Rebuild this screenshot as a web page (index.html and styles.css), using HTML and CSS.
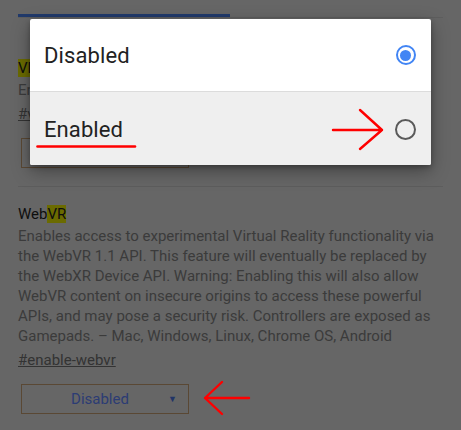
FILE: index.html
```html
<!DOCTYPE html>
<html lang="en">
<head>
<meta charset="utf-8">
<title>Flags</title>
<link rel="stylesheet" href="styles.css">
</head>
<body>
<div class="page">
  <div class="tabs"><div class="tab-active"></div></div>

  <section class="flag first">
    <h3 class="flag-title"><span class="hl">VR</span> Shell</h3>
    <p class="flag-desc">Enables a browser UI in Virtual Reality.</p>
    <a class="flag-link" href="#">#vr-shell</a>
    <div class="select"><span class="select-value">Default</span><span class="select-caret">▼</span></div>
  </section>

  <section class="flag">
    <h3 class="flag-title">Web<span class="hl">VR</span></h3>
    <p class="flag-desc">Enables access to experimental Virtual Reality functionality via the WebVR 1.1 API. This feature will eventually be replaced by the WebXR Device API. Warning: Enabling this will also allow WebVR content on insecure origins to access these powerful APIs, and may pose a security risk. Controllers are exposed as Gamepads. – Mac, Windows, Linux, Chrome OS, Android</p>
    <a class="flag-link" href="#">#enable-webvr</a>
    <div class="select"><span class="select-value">Disabled</span><span class="select-caret">▼</span></div>
  </section>
</div>

<div class="dialog">
  <div class="option">
    <span class="option-label">Disabled</span>
    <span class="radio radio-on"></span>
  </div>
  <div class="option option-alt">
    <span class="option-label">Enabled</span>
    <span class="radio"></span>
  </div>
</div>

<svg class="annot" width="461" height="430" viewBox="0 0 461 430" aria-hidden="true">
  <g stroke="#ff0000" stroke-width="2.4" fill="none" stroke-linecap="round" stroke-linejoin="round">
    <path d="M37.5 146.5 H135" stroke-width="2.6"/>
    <path d="M333 130 H382 M360 110 L382 130 L360 149"/>
    <path d="M249 398 H205 M222 382 L205 398 L222 414"/>
  </g>
</svg>
</body>
</html>
```

FILE: styles.css
```css
html {
  background: #666666;
  color-scheme: light;
}
html, body {
  margin: 0;
  padding: 0;
}
body {
  background: #666666;
  width: 461px;
  height: 430px;
  overflow: hidden;
  font-family: Roboto, "Noto Sans", "Liberation Sans", sans-serif;
}
.page {
  padding: 14px 18px 0 18px;
  width: 425px;
  background: #666666;
  height: 430px;
  box-sizing: border-box;
  width: 461px;
}
.tabs {
  height: 3px;
  border-bottom: 1px solid #5e5e5e;
  display: flex;
}
.tab-active {
  width: 212px;
  height: 3px;
  background: #213a6b;
}
.flag {
  padding: 40px 0 18px 0;
  border-bottom: 1px solid #5d5d5d;
  display: flex;
  flex-direction: column;
  align-items: flex-start;
}
.flag + .flag {
  padding-top: 17px;
  border-bottom: none;
}
.flag-title {
  margin: 0;
  font-size: 15px;
  line-height: 20px;
  font-weight: 400;
  color: #0e0e0e;
}
.hl {
  background: #6b6b00;
  color: #0e0e0e;
}
.flag-desc {
  margin: 2px 0 0 0;
  font-size: 15px;
  line-height: 20px;
  color: #3b3b3b;
}
.flag-link {
  margin-top: 4px;
  font-size: 15px;
  line-height: 20px;
  color: #333333;
  text-decoration: underline;
}
.select {
  margin: 14px 0 0 3px;
  width: 166px;
  height: 28px;
  border: 1px solid #5a4834;
  display: flex;
  align-items: center;
}
.select-value {
  flex: 1;
  text-align: center;
  font-size: 15px;
  color: #2c3c74;
  padding-left: 10px;
}
.select-caret {
  font-size: 9px;
  color: #213466;
  width: 20px;
  text-align: left;
}
.dialog {
  position: absolute;
  left: 30px;
  top: 19px;
  width: 401px;
  background: #ffffff;
  border-radius: 2px;
  overflow: hidden;
  box-shadow: 0 6px 18px rgba(0,0,0,0.35), 0 2px 5px rgba(0,0,0,0.25);
}
.option {
  height: 72px;
  display: flex;
  align-items: center;
  justify-content: space-between;
  padding: 0 15px 0 14px;
  border-bottom: 1px solid #dcdcdc;
}
.option-alt {
  background: #efefef;
  border-bottom: none;
  height: 73px;
  padding-top: 2px;
  box-sizing: border-box;
}
.option-label {
  font-size: 22px;
  color: #222222;
  letter-spacing: 0.1px;
}
.radio {
  width: 17px;
  height: 17px;
  border: 2px solid #5a5a5a;
  border-radius: 50%;
  position: relative;
}
.radio-on {
  border: 2.4px solid #4285f4;
  width: 16.5px;
  height: 16.5px;
}
.radio-on::after {
  content: "";
  position: absolute;
  left: 50%;
  top: 50%;
  width: 11px;
  height: 11px;
  margin: -5.5px 0 0 -5.5px;
  border-radius: 50%;
  background: #4285f4;
}
.annot {
  position: absolute;
  left: 0;
  top: 0;
  pointer-events: none;
}
```
